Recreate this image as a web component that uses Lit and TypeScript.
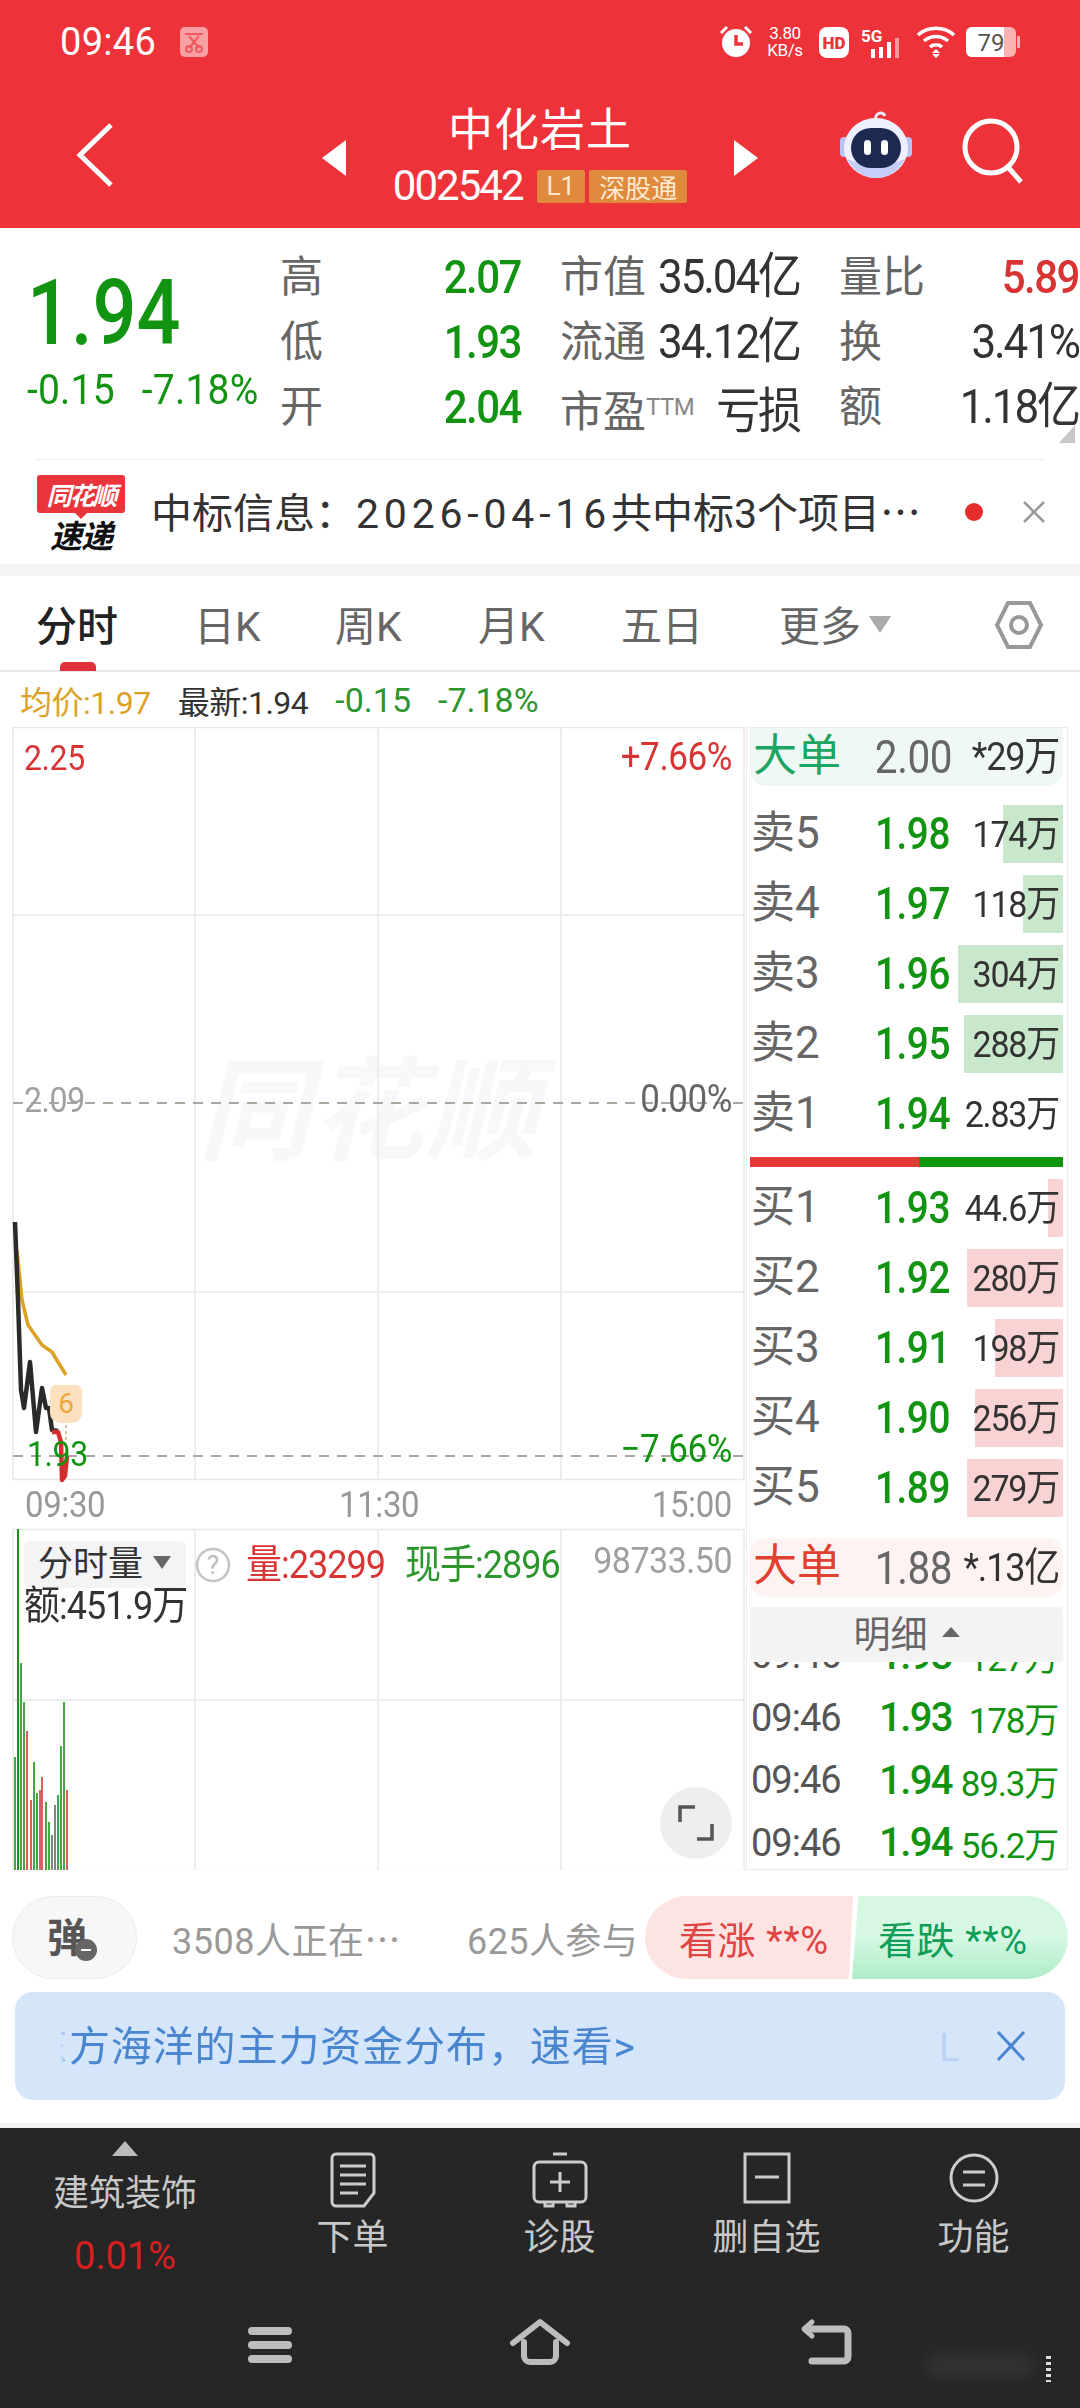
import {LitElement, css, html, svg, unsafeCSS} from 'lit';
import {customElement} from 'lit/decorators.js';

const GREEN = '#129412';
const RED = '#d93434';
const green = unsafeCSS(GREEN);
const red = unsafeCSS(RED);

interface Level {
  label: string;
  price: string;
  vol: string;
  bar: number;
}

const SELLS: Level[] = [
  {label: '卖5', price: '1.98', vol: '174万', bar: 60},
  {label: '卖4', price: '1.97', vol: '118万', bar: 40},
  {label: '卖3', price: '1.96', vol: '304万', bar: 105},
  {label: '卖2', price: '1.95', vol: '288万', bar: 99},
  {label: '卖1', price: '1.94', vol: '2.83万', bar: 0},
];

const BUYS: Level[] = [
  {label: '买1', price: '1.93', vol: '44.6万', bar: 15},
  {label: '买2', price: '1.92', vol: '280万', bar: 96},
  {label: '买3', price: '1.91', vol: '198万', bar: 68},
  {label: '买4', price: '1.90', vol: '256万', bar: 88},
  {label: '买5', price: '1.89', vol: '279万', bar: 96},
];

const TICKS = [
  ['09:46', '1.93', '127万'],
  ['09:46', '1.93', '178万'],
  ['09:46', '1.94', '89.3万'],
  ['09:46', '1.94', '56.2万'],
];

// x, top y, colour of each volume bar, in page coordinates
const VOLUME: [number, number, string][] = [
  [15, 1757, GREEN], [18, 1529, GREEN], [21, 1663, GREEN], [24, 1702, GREEN],
  [27, 1731, RED], [31, 1800, RED], [34, 1762, GREEN], [37, 1793, GREEN],
  [40, 1790, RED], [42, 1777, RED], [46, 1802, GREEN], [49, 1822, GREEN],
  [52, 1835, '#666'], [55, 1805, '#666'], [58, 1795, GREEN], [61, 1746, GREEN],
  [64, 1702, GREEN], [67, 1790, RED],
];

const ICON_ORDER = svg`
  <path d="M7 2h34a4 4 0 0 1 4 4v35l-10 13H7a4 4 0 0 1-4-4V6a4 4 0 0 1 4-4z"/>
  <path d="M11 14h26M11 23h26M11 32h26M11 41h18"/>`;
const ICON_DIAG = svg`
  <path d="M22 2h14M8 10h42a5 5 0 0 1 5 5v30a5 5 0 0 1-5 5H8a5 5 0 0 1-5-5V15a5 5 0 0 1 5-5z"/>
  <path d="M19 30h20M29 20v20"/><path d="M14 51v3h8v-3M36 51v3h8v-3"/>`;
const ICON_DELETE = svg`<path d="M2 2h44v48H2z"/><path d="M12 25h24"/>`;
const ICON_MENU = svg`<circle cx="25" cy="26" r="23"/><path d="M14 20h22M14 33h22"/>`;

@customElement('app-root')
export class AppRoot extends LitElement {
  static styles = css`
    :host {
      display: block;
      width: 1080px;
      height: 2408px;
      overflow: hidden;
      background: #fff;
      color: #333;
      font-family: Roboto, "Noto Sans CJK SC", sans-serif;
    }
    * { box-sizing: border-box; }
    .page { display: flex; flex-direction: column; height: 2408px; }
    .cjk { font-family: "Noto Sans CJK SC", sans-serif; }
    .tall { display: inline-block; transform: scaleY(1.1); }

    /* red header */
    .header { height: 228px; flex: none; background: #ee3239; color: #fff; }
    .status { height: 84px; display: flex; align-items: center; padding: 0 60px; }
    .clock { font-size: 38px; letter-spacing: 0.3px; width: 120px; }
    .status-right { margin-left: auto; display: flex; align-items: center; }
    .speed { font-size: 17px; line-height: 17px; text-align: center; width: 42px; margin: 0 13px 0 11px; letter-spacing: -0.4px; }
    .nav { display: grid; grid-template-columns: 322px 436px 322px; height: 144px; }
    .nav-left { padding: 39px 0 0 75px; }
    .nav-title { display: flex; justify-content: space-between; align-items: flex-start; padding-top: 56px; position: relative; }
    .title-block { position: absolute; left: 0; right: 0; top: 0; display: flex; flex-direction: column; align-items: center; }
    .title { font-size: 45px; line-height: 60px; margin-top: 13px; letter-spacing: 1px; font-family: "Noto Sans CJK SC", sans-serif; }
    .code-row { display: flex; align-items: center; gap: 4px; margin-top: 7px; }
    .code { font-size: 42px; letter-spacing: -2px; line-height: 44px; margin-right: 10px; }
    .tag { background: #e08a3e; font-size: 26px; height: 33px; line-height: 33px; padding: 0 10px; border-radius: 2px; color: #ffe9cf; white-space: nowrap; }
    .nav-right { display: flex; padding: 26px 0 0 82px; gap: 50px; }
    .search { margin-top: 8px; }

    /* quote */
    .quote { height: 231px; flex: none; display: flex; position: relative; }
    .price-col { width: 280px; flex: none; padding-left: 27px; }
    .price { font-size: 90px; line-height: 90px; margin-top: 41px; font-weight: 500; color: ${green}; transform: scaleX(0.86); transform-origin: left; }
    .change { display: flex; gap: 27px; margin-top: 8px; color: ${green}; font-size: 39px; letter-spacing: 0.2px; line-height: 46px; white-space: nowrap; transform: scaleY(1.08); }
    .stats { width: 800px; display: grid; grid-template-columns: 241px 240px 240px; column-gap: 39px; grid-auto-rows: 65px; padding-top: 17px; }
    .stat { display: flex; justify-content: space-between; align-items: baseline; white-space: nowrap; color: #333; font-size: 44px; letter-spacing: -2.1px; line-height: 65px; }
    .stat .k { color: #666; font-size: 43px; letter-spacing: 0; }
    .stat .g { color: ${green}; font-weight: 500; font-size: 42px; letter-spacing: -1.5px; }
    .stat .r { color: ${red}; font-weight: 500; font-size: 42px; letter-spacing: -1.5px; }
    .ttm { font-size: 24px; color: #888; vertical-align: 12px; letter-spacing: -0.5px; }
    .corner { position: absolute; right: 5px; bottom: 16px; width: 0; height: 0; border-left: 16px solid transparent; border-bottom: 18px solid #c8c8c8; }

    /* news line */
    .news { height: 105px; flex: none; margin: 0 35px; border-top: 1px solid #eee; display: flex; align-items: center; position: relative; }
    .logo { width: 88px; flex: none; margin-left: 2px; display: flex; flex-direction: column; align-items: center; font-style: italic; font-weight: 700; }
    .logo-top { width: 88px; height: 38px; line-height: 38px; text-align: center; background: #e8343a; color: #fff; font-size: 25px; letter-spacing: -2px; border-radius: 3px; white-space: nowrap; }
    .logo-tip { width: 12px; height: 6px; border-left: 6px solid transparent; border-right: 6px solid transparent; border-top: 6px solid #e8343a; }
    .logo-bot { font-size: 32px; line-height: 30px; color: #111; letter-spacing: -1px; white-space: nowrap; }
    .news-text { margin-left: 26px; font-size: 41px; white-space: nowrap; width: 777px; flex: none; color: #333; padding-bottom: 4px; }
    .date { letter-spacing: 4.8px; }
    .dot { width: 18px; height: 18px; flex: none; border-radius: 50%; background: #e62d2d; margin-left: 37px; }
    .news-x { margin-left: 39px; flex: none; }

    .band { height: 12px; flex: none; background: #f4f4f4; }

    /* tabs */
    .tabs { height: 96px; flex: none; display: flex; align-items: center; border-bottom: 2px solid #e8e8e8; position: relative; padding-left: 36px; font-size: 41px; color: #666; }
    .tab { width: 143px; white-space: nowrap; }
    .tab.on { color: #222; font-weight: 500; width: 158px; }
    .tab.on::after { content: ''; position: absolute; left: 60px; bottom: -1px; width: 36px; height: 9px; background: #e0323a; border-radius: 5px 5px 0 0; }
    .tab.short { width: 141px; }
    .tab.long { width: 158px; }
    .caret { display: inline-block; width: 0; height: 0; border: 11px solid transparent; border-top: 17px solid #aaa; border-bottom: 0; margin-left: 8px; vertical-align: 8px; }
    .hex { position: absolute; left: 994px; top: 24px; }

    .legend { height: 55px; flex: none; display: flex; align-items: center; padding-left: 20px; font-size: 32px; letter-spacing: -0.5px; gap: 27px; white-space: nowrap; }
    .legend .y { color: #dba227; }
    .legend .g { color: #2c962c; font-size: 34px; letter-spacing: 0; }

    /* chart area */
    .main { flex: none; height: 1143px; display: flex; }
    .charts { width: 746px; flex: none; position: relative; }
    .plot { position: absolute; left: 0; top: 0; }
    .lbl { position: absolute; font-size: 32px; line-height: 36px; white-space: nowrap; letter-spacing: -0.4px; transform: scaleY(1.1); }
    .wide-lbl { font-size: 35px; right: 14px; }
    .left-lbl { left: 24px; }
    .top-row { top: 13px; }
    .mid-row { top: 355px; }
    .axis { top: 760px; color: #999; font-size: 33px; }
    .t-red { color: ${red}; }
    .t-green { color: ${green}; }
    .t-dim { color: #a0a0a0; }
    .t-mid { color: #666; }
    .low-left { left: 27px; top: 709px; }
    .low-right { top: 705px; }
    .axis-a { left: 25px; }
    .axis-b { left: 339px; }
    .axis-c { right: 14px; }
    .amount { left: 24px; top: 861px; font-size: 36px; color: #333; letter-spacing: -1px; }
    .vol-q { position: absolute; left: 195px; top: 820px; }
    .vol-a { left: 246px; top: 820px; font-size: 36px; color: ${red}; letter-spacing: -1px; }
    .vol-b { left: 405px; top: 820px; font-size: 36px; color: #2c962c; letter-spacing: -1px; }
    .vol-c { right: 14px; top: 815px; font-size: 34px; color: #a0a0a0; letter-spacing: -0.5px; }
    .mark { position: absolute; left: 50px; top: 658px; width: 32px; height: 38px; background: #fbe1bf; border-radius: 6px 6px 10px 10px; color: #eda63a; font-size: 28px; line-height: 38px; text-align: center; }
    .wm { position: absolute; left: 198px; top: 315px; font-size: 112px; font-weight: 700; font-style: italic; color: #f8f8f8; letter-spacing: 2px; line-height: 120px; white-space: nowrap; }
    .vol-select { position: absolute; left: 24px; top: 814px; width: 162px; height: 47px; background: #f4f4f4; border-radius: 6px; font-size: 35px; line-height: 47px; padding-left: 14px; color: #333; white-space: nowrap; }
    .vol-caret { display: inline-block; width: 0; height: 0; border: 9px solid transparent; border-top: 13px solid #666; border-bottom: 0; margin-left: 10px; vertical-align: 7px; }
    .expand { position: absolute; left: 660px; top: 1060px; width: 72px; height: 72px; border-radius: 50%; background: #eeeeee; display: flex; align-items: center; justify-content: center; }

    /* order book */
    .book { width: 322px; flex: none; border: 1px solid #ececec; padding: 0 4px 0 3px; height: 1143px; overflow: hidden; }
    .row { position: relative; height: 58px; display: grid; grid-template-columns: 110px 89px 1fr; align-items: center; padding: 0 4px 0 1px; white-space: nowrap; }
    .row > span { position: relative; line-height: 40px; }
    .row .k { font-size: 44px; color: #666; margin-bottom: 3px; }
    .row .p { font-size: 44px; font-weight: 500; text-align: right; letter-spacing: -0.5px; color: ${green}; transform: scaleX(0.88); transform-origin: right; }
    .row .v { font-size: 34px; text-align: right; letter-spacing: -1.2px; color: #333; transform: scaleY(1.1); }
    .bar { position: absolute; right: 0; top: 0; bottom: 0; }
    .sell .bar { background: #c9e8cb; }
    .buy .bar { background: #f9d3d3; }
    .big { height: 58px; border-radius: 0 0 16px 16px; padding-left: 3px; }
    .big .k { font-size: 44px; }
    .big .p { color: #666; font-weight: 400; font-size: 46px; }
    .big .v { font-size: 36px; }
    .big.up { background: #eff8f4; }
    .big.up .k { color: #1ca563; }
    .big.down { background: #fdf3f2; border-radius: 16px; margin-top: 21px; height: 59px; }
    .big.down .k { color: #e0402f; }
    .sells { display: flex; flex-direction: column; gap: 12px; margin-top: 19px; }
    .split { display: flex; height: 10px; margin-top: 14px; }
    .split i { display: block; }
    .split .a { width: 169px; background: #e53935; }
    .split .b { flex: 1; background: #0f960f; }
    .buys { display: flex; flex-direction: column; gap: 12px; margin-top: 12px; }
    .detail { height: 55px; margin-top: 10px; background: #f3f3f3; border-radius: 4px; display: flex; align-items: center; justify-content: center; color: #666; font-size: 37px; gap: 14px; position: relative; z-index: 1; padding-bottom: 6px; }
    .detail i { width: 0; height: 0; border: 9px solid transparent; border-bottom: 10px solid #666; border-top: 0; }
    .ticks { height: 210px; overflow: hidden; }
    .tick { height: 62.5px; display: grid; grid-template-columns: 102px 99px 1fr; align-items: center; padding: 0 4px 0 1px; font-size: 38px; white-space: nowrap; letter-spacing: -1px; }
    .tick:first-child { margin-top: -38px; }
    .tick .t { color: #555; }
    .tick .p { color: ${green}; font-weight: 500; text-align: right; font-size: 40px; letter-spacing: -1.6px; }
    .tick .v { color: ${green}; text-align: right; font-size: 35px; padding-right: 1px; letter-spacing: -1.2px; }

    /* vote strip */
    .vote { height: 83px; flex: none; margin-top: 26px; padding: 0 13px 0 12px; display: flex; align-items: center; position: relative; }
    .danmu { width: 125px; height: 83px; flex: none; border: 1px solid #ececec; background: #f7f7f7; border-radius: 42px; position: relative; padding-left: 34px; font-size: 40px; line-height: 77px; font-weight: 700; color: #555; }
    .danmu i { position: absolute; left: 62px; top: 42px; width: 22px; height: 22px; background: #666; border-radius: 50%; }
    .danmu i::after { content: ''; position: absolute; left: 6px; top: 10px; width: 10px; height: 2px; background: #fff; }
    .watching { font-size: 36px; color: #999; margin-left: 35px; width: 295px; flex: none; white-space: nowrap; letter-spacing: 0.5px; }
    .joined { font-size: 36px; color: #999; width: 178px; flex: none; white-space: nowrap; letter-spacing: 0.4px; }
    .pill { height: 83px; flex: none; display: flex; align-items: center; font-size: 38px; white-space: nowrap; letter-spacing: 0.6px; }
    .pill.up { width: 208px; padding-left: 34px; background: #fde3e1; color: #e04545; border-radius: 42px 0 0 42px; clip-path: polygon(0 0, 100% 0, 98% 100%, 0 100%); }
    .pill.dn { width: 216px; padding-left: 26px; margin-left: -1px; color: #0f9d58; background: linear-gradient(#d6f8e3, #d6f8e3 50%, #aeecc6); border-radius: 0 42px 42px 0; clip-path: polygon(3% 0, 100% 0, 100% 100%, 0 100%); }

    .banner { height: 108px; flex: none; margin: 13px 15px 0; background: #d6e6fa; border-radius: 18px; display: flex; align-items: center; color: #4a86cf; font-size: 41px; padding-left: 45px; position: relative; white-space: nowrap; }
    .marquee { width: 600px; overflow: hidden; -webkit-mask-image: linear-gradient(90deg, transparent, #000 10px); mask-image: linear-gradient(90deg, transparent, #000 10px); padding: 0 0 6px; }
    .marquee span { display: block; margin-left: -33px; letter-spacing: 0.9px; }
    .banner-l { position: absolute; left: 924px; top: 34px; color: #bcd2f0; font-size: 38px; }
    .banner svg { position: absolute; left: 980px; top: 38px; }

    /* dark bar */
    .spacer { height: 23px; flex: none; }
    .gap { height: 5px; flex: none; background: #f2f2f2; }
    .dock { flex: 1; background: #262626; color: #c8c8c8; position: relative; }
    .dock-top { height: 186px; display: flex; }
    .sector { width: 248px; text-align: center; font-size: 36px; margin-left: 1px; white-space: nowrap; }
    .sector i { display: block; width: 0; height: 0; margin: 13px auto 14px; border: 13px solid transparent; border-bottom: 15px solid #bbb; border-top: 0; }
    .sector .nm { line-height: 48px; }
    .sector .pct { line-height: 48px; color: #d81e1e; margin-top: 14px; font-size: 38px; }
    .dock-item { width: 207px; display: flex; flex-direction: column; align-items: center; font-size: 36px; white-space: nowrap; }
    .dock-item svg { margin-top: 24px; height: 56px; fill: none; stroke: #ccc; stroke-width: 3; }
    .dock-item span { line-height: 48px; margin-top: 6px; }
    .sys { position: absolute; left: 0; top: 186px; width: 100%; }
    .sys svg { position: absolute; fill: none; stroke: #bdbdbd; stroke-linecap: round; stroke-linejoin: round; }
    .sys-menu { left: 248px; top: 12px; }
    .sys-home { left: 509px; top: 4px; }
    .sys-back { left: 798px; top: 4px; }
    .smear { position: absolute; left: 925px; top: 225px; width: 110px; height: 24px; background: #333; border-radius: 12px; filter: blur(8px); }
    .speck { position: absolute; left: 1046px; top: 228px; width: 5px; height: 26px; background: repeating-linear-gradient(#ddd 0 3px, #262626 3px 6px); }
  `;

  private renderLevel_(level: Level, side: string) {
    return html`<div class="row ${side}">
      ${level.bar ? html`<div class="bar" style="width:${level.bar}px"></div>` : ''}
      <span class="k">${level.label}</span>
      <span class="p">${level.price}</span>
      <span class="v">${level.vol}</span>
    </div>`;
  }

  private renderHeader_() {
    return html`<div class="header">
      <div class="status">
        <span class="clock">09:46</span>
        <svg width="28" height="30" viewBox="0 0 28 30">
          <rect width="28" height="30" rx="5" fill="#f7a0a3"/>
          <path d="M5 7h18M9 9l10 12M19 9L9 21" stroke="#ee5a60" stroke-width="2" fill="none"/>
          <circle cx="9" cy="22" r="3" stroke="#ee5a60" stroke-width="2" fill="none"/>
          <circle cx="19" cy="22" r="3" stroke="#ee5a60" stroke-width="2" fill="none"/>
        </svg>
        <div class="status-right">
          <svg width="34" height="34" viewBox="0 0 34 34">
            <circle cx="17" cy="18" r="14" fill="#fff"/>
            <path d="M2 8l6-6M32 8l-6-6" stroke="#fff" stroke-width="3"/>
            <path d="M17 10v9h7" stroke="#ee3239" stroke-width="3.5" fill="none"/>
          </svg>
          <div class="speed">3.80<br />KB/s</div>
          <svg width="30" height="31" viewBox="0 0 30 31">
            <rect width="30" height="31" rx="8" fill="#fff"/>
            <text x="15" y="22" text-anchor="middle" font-size="17" font-weight="900" fill="#ee3239" font-family="Roboto">HD</text>
          </svg>
          <svg width="45" height="31" viewBox="0 0 45 31" style="margin-left:12px">
            <text x="0" y="15" font-size="17" font-weight="700" fill="#fff" font-family="Roboto">5G</text>
            <g fill="#fff"><rect x="10" y="22" width="4" height="9"/><rect x="18" y="20" width="4" height="11"/><rect x="26" y="15" width="4" height="16"/></g>
            <rect x="34" y="11" width="4" height="20" fill="#f59a9a"/>
          </svg>
          <svg width="40" height="32" viewBox="0 0 40 32" style="margin-left:10px" fill="none" stroke="#fff" stroke-width="3.5">
            <path d="M2 9c10-9 26-9 36 0M8 15c7-6 17-6 24 0M14 21c3-3 9-3 12 0"/>
            <path d="M20 23l-4 4h8zM20 32l-4-4h8z" fill="#fff" stroke="none"/>
          </svg>
          <svg width="54" height="30" viewBox="0 0 54 30" style="margin-left:10px">
            <rect width="50" height="30" rx="6" fill="#f9b3b3"/>
            <path d="M6 0h32v30H6a6 6 0 0 1-6-6V6a6 6 0 0 1 6-6z" fill="#fff"/>
            <rect x="51" y="9" width="3" height="12" rx="1" fill="#f9b3b3"/>
            <text x="25" y="24" text-anchor="middle" font-size="24" fill="#555" font-family="Roboto">79</text>
          </svg>
        </div>
      </div>
      <div class="nav">
        <div class="nav-left">
          <svg width="38" height="64" viewBox="0 0 38 64" fill="none" stroke="#fff" stroke-width="5">
            <path d="M36 2L5 32l31 30"/>
          </svg>
        </div>
        <div class="nav-title">
          <svg width="24" height="36" viewBox="0 0 24 36"><path d="M24 0v36L0 18z" fill="#fff"/></svg>
          <div class="title-block">
            <span class="title">中化岩土</span>
            <div class="code-row">
              <span class="code">002542</span>
              <span class="tag">L1</span>
              <span class="tag cjk">深股通</span>
            </div>
          </div>
          <svg width="24" height="36" viewBox="0 0 24 36"><path d="M0 0v36l24-18z" fill="#fff"/></svg>
        </div>
        <div class="nav-right">
          <svg width="72" height="68" viewBox="0 0 72 68">
            <path d="M36 10c-2-6 6-10 9-4" stroke="#e8ecff" stroke-width="3" fill="none"/>
            <rect x="0" y="27" width="8" height="20" rx="4" fill="#b9c4f5"/>
            <rect x="64" y="27" width="8" height="20" rx="4" fill="#b9c4f5"/>
            <ellipse cx="36" cy="38" rx="32" ry="30" fill="#eef0ff"/>
            <path d="M6 48c8 14 18 20 30 20s22-6 30-20c-12 8-48 8-60 0z" fill="#c5cdf8"/>
            <rect x="11" y="18" width="50" height="40" rx="20" fill="#1c2a52"/>
            <rect x="24" y="30" width="7" height="15" rx="3.5" fill="#fff"/>
            <rect x="41" y="30" width="7" height="15" rx="3.5" fill="#fff"/>
          </svg>
          <svg class="search" width="62" height="66" viewBox="0 0 62 66" fill="none" stroke="#fff" stroke-width="5">
            <circle cx="29" cy="29" r="26"/><path d="M46 49l13 15"/>
          </svg>
        </div>
      </div>
    </div>`;
  }

  private renderQuote_() {
    return html`<div class="quote">
      <div class="price-col">
        <div class="price">1.94</div>
        <div class="change"><span>-0.15</span><span>-7.18%</span></div>
      </div>
      <div class="stats">
        <div class="stat"><span class="k">高</span><span class="g tall">2.07</span></div>
        <div class="stat"><span class="k">市值</span><span class="tall">35.04亿</span></div>
        <div class="stat"><span class="k">量比</span><span class="r tall">5.89</span></div>
        <div class="stat"><span class="k">低</span><span class="g tall">1.93</span></div>
        <div class="stat"><span class="k">流通</span><span class="tall">34.12亿</span></div>
        <div class="stat"><span class="k">换</span><span class="tall">3.41%</span></div>
        <div class="stat"><span class="k">开</span><span class="g tall">2.04</span></div>
        <div class="stat"><span class="k">市盈<span class="ttm">TTM</span></span><span class="tall">亏损</span></div>
        <div class="stat"><span class="k">额</span><span class="tall">1.18亿</span></div>
      </div>
      <div class="corner"></div>
    </div>`;
  }

  private renderNews_() {
    return html`<div class="news">
      <div class="logo">
        <div class="logo-top cjk">同花顺</div>
        <div class="logo-tip"></div>
        <div class="logo-bot cjk">速递</div>
      </div>
      <div class="news-text">中标信息：<span class="date">2026-04-16</span>共中标3个项目<span class="cjk">…</span></div>
      <div class="dot"></div>
      <svg class="news-x" width="24" height="24" viewBox="0 0 24 24" stroke="#999" stroke-width="2.5">
        <path d="M2 2l20 20M22 2L2 22"/>
      </svg>
    </div>`;
  }

  private renderTabs_() {
    return html`<div class="tabs">
      <span class="tab on">分时</span>
      <span class="tab short">日K</span>
      <span class="tab">周K</span>
      <span class="tab">月K</span>
      <span class="tab long">五日</span>
      <span class="tab">更多<i class="caret"></i></span>
      <svg class="hex" width="50" height="50" viewBox="0 0 50 50" fill="none" stroke="#999" stroke-width="4">
        <path d="M14 3h22l11 22-11 22H14L3 25z"/><circle cx="25" cy="25" r="8"/>
      </svg>
    </div>`;
  }

  private renderCharts_() {
    const vLines = [195, 378, 561];
    return html`<div class="charts">
      <div class="wm cjk">同花顺</div>
      <svg class="plot" width="746" height="1143" viewBox="0 727 746 1143" fill="none">
        <g stroke="#e8e8e8" stroke-width="1.5">
          <rect x="13" y="727.5" width="731" height="752"/>
          <rect x="13" y="1529.5" width="731" height="341"/>
          ${vLines.map((x) => svg`<path d="M${x} 727v752M${x} 1529v341"/>`)}
          <path d="M13 915h731M13 1292h731M13 1700h731"/>
        </g>
        <g stroke="#a8a8a0" stroke-width="2" stroke-dasharray="10 8">
          <path d="M13 1103h731M13 1456h731"/>
        </g>
        <path d="M66 1425v31" stroke="#c9b070" stroke-width="1.5" stroke-dasharray="3 3"/>
        <path d="M17 1250l5 50 6 25 14 20 10 7 6 10 8 13" stroke="#dba227" stroke-width="3.5" stroke-linejoin="round"/>
        <path d="M15 1222l3 78 3 90 3 18 6-46 6 70 6-44 4 20h3l3 22 6 1" stroke="#2a2a2a" stroke-width="4.5" stroke-linejoin="round"/>
        <path d="M52 1432h6l3 10 1 38 3-4 2-20" stroke="#d32f2f" stroke-width="4.5" stroke-linejoin="round"/>
        ${VOLUME.map(([x, top, color]) => svg`<path d="M${x} ${top}V1870" stroke=${color} stroke-width="1.6"/>`)}
        <path d="M18 1529v341" stroke=${GREEN} stroke-width="2"/>
      </svg>
      <div class="mark">6</div>
      <span class="lbl left-lbl top-row t-red">2.25</span>
      <span class="lbl wide-lbl top-row t-red">+7.66%</span>
      <span class="lbl left-lbl mid-row t-dim">2.09</span>
      <span class="lbl wide-lbl mid-row t-mid">0.00%</span>
      <span class="lbl low-left t-green">1.93</span>
      <span class="lbl wide-lbl low-right t-green">−7.66%</span>
      <span class="lbl axis axis-a">09:30</span>
      <span class="lbl axis axis-b">11:30</span>
      <span class="lbl axis axis-c">15:00</span>
      <div class="vol-select">分时量<i class="vol-caret"></i></div>
      <span class="lbl amount">额:451.9万</span>
      <svg class="vol-q" width="36" height="36" viewBox="0 0 36 36" fill="none">
        <circle cx="18" cy="18" r="16" stroke="#c4c4c4" stroke-width="2.5"/>
        <text x="18" y="27" text-anchor="middle" font-size="26" fill="#bbb" font-family="Roboto" stroke="none">?</text>
      </svg>
      <span class="lbl vol-a">量:23299</span>
      <span class="lbl vol-b">现手:2896</span>
      <span class="lbl vol-c">98733.50</span>
      <div class="expand">
        <svg width="36" height="36" viewBox="0 0 36 36" fill="none" stroke="#555" stroke-width="3.5">
          <path d="M2 17V2h15M34 19v15H19"/>
        </svg>
      </div>
    </div>`;
  }

  private renderBook_() {
    return html`<div class="book">
      <div class="row big up">
        <span class="k">大单</span><span class="p">2.00</span><span class="v">*29万</span>
      </div>
      <div class="sells">${SELLS.map((l) => this.renderLevel_(l, 'sell'))}</div>
      <div class="split"><i class="a"></i><i class="b"></i></div>
      <div class="buys">${BUYS.map((l) => this.renderLevel_(l, 'buy'))}</div>
      <div class="row big down">
        <span class="k">大单</span><span class="p">1.88</span><span class="v">*.13亿</span>
      </div>
      <div class="detail">明细<i></i></div>
      <div class="ticks">
        ${TICKS.map(([t, p, v]) => html`<div class="tick">
          <span class="t">${t}</span><span class="p">${p}</span><span class="v">${v}</span>
        </div>`)}
      </div>
    </div>`;
  }

  private renderDock_() {
    const items: [string, unknown, number][] = [
      ['下单', ICON_ORDER, 48],
      ['诊股', ICON_DIAG, 58],
      ['删自选', ICON_DELETE, 48],
      ['功能', ICON_MENU, 50],
    ];
    return html`<div class="dock">
      <div class="dock-top">
        <div class="sector">
          <i></i>
          <div class="nm">建筑装饰</div>
          <div class="pct">0.01%</div>
        </div>
        ${items.map(([label, icon, w]) => html`<div class="dock-item">
          <svg width=${w} viewBox="0 0 ${w} 56">${icon}</svg>
          <span>${label}</span>
        </div>`)}
      </div>
      <div class="sys">
        <svg class="sys-menu" width="44" height="38" viewBox="0 0 44 38" stroke-width="8">
          <path d="M4 5h36M4 19h36M4 33h36"/>
        </svg>
        <svg class="sys-home" width="62" height="48" viewBox="0 0 62 48" stroke-width="6">
          <path d="M4 25L31 4l27 21M15 24v14a6 6 0 0 0 6 6h20a6 6 0 0 0 6-6V24"/>
        </svg>
        <svg class="sys-back" width="56" height="48" viewBox="0 0 56 48" stroke-width="7">
          <path d="M12 11h34a4 4 0 0 1 4 4v24a4 4 0 0 1-4 4H14"/>
          <path d="M14 4L6 11l8 7" stroke-width="5"/>
        </svg>
      </div>
      <div class="smear"></div>
      <div class="speck"></div>
    </div>`;
  }

  render() {
    return html`<div class="page">
      ${this.renderHeader_()}
      ${this.renderQuote_()}
      ${this.renderNews_()}
      <div class="band"></div>
      ${this.renderTabs_()}
      <div class="legend">
        <span class="y">均价:1.97</span>
        <span>最新:1.94</span>
        <span class="g">-0.15</span>
        <span class="g">-7.18%</span>
      </div>
      <div class="main">
        ${this.renderCharts_()}
        ${this.renderBook_()}
      </div>
      <div class="vote">
        <div class="danmu cjk">弹<i></i></div>
        <span class="watching">3508人正在<span class="cjk">…</span></span>
        <span class="joined">625人参与</span>
        <div class="pill up">看涨 **%</div>
        <div class="pill dn">看跌 **%</div>
      </div>
      <div class="banner">
        <div class="marquee"><span>东方海洋的主力资金分布，速看&gt;</span></div>
        <span class="banner-l">L</span>
        <svg width="32" height="32" viewBox="0 0 32 32" stroke="#4a86cf" stroke-width="3"><path d="M3 2l26 28M29 2L3 30"/></svg>
      </div>
      <div class="spacer"></div>
      <div class="gap"></div>
      ${this.renderDock_()}
    </div>`;
  }
}
